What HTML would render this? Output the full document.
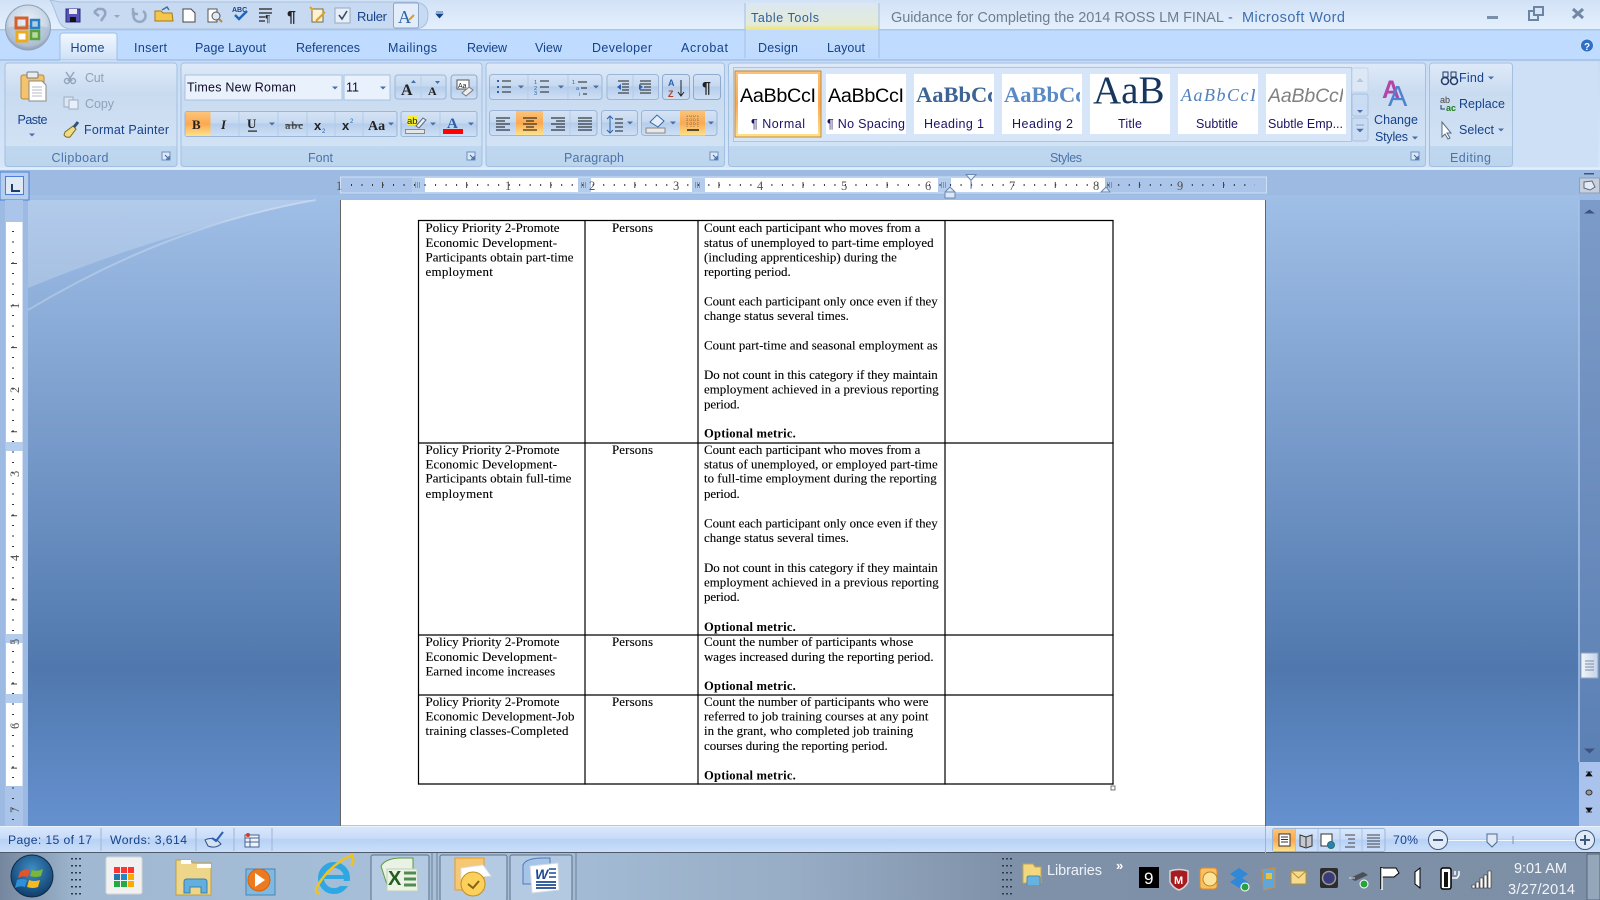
<!DOCTYPE html>
<html><head><meta charset="utf-8"><title>Microsoft Word</title>
<style>
html,body{margin:0;padding:0;width:1600px;height:900px;overflow:hidden;background:#9dbbe2}
svg{display:block}
text{font-family:"Liberation Sans",sans-serif;white-space:pre}
.r{font-size:12.5px;fill:#15428b}
.g{font-size:12.5px;fill:#4d72a8}
.k{font-size:12.5px;fill:#1a1a55}
.d{font-family:"Liberation Serif",serif;font-size:12.9px;fill:#000;stroke:#000;stroke-width:.12}
.b{font-family:"Liberation Serif",serif;font-size:12.6px;font-weight:bold;fill:#000}
.n{font-family:"Liberation Serif",serif;font-size:12.5px;fill:#555}
.w{fill:#fff;font-size:14px}
.s{font-size:12.2px;fill:#15428b}
</style></head><body>
<svg xmlns="http://www.w3.org/2000/svg" width="1600" height="900" viewBox="0 0 1600 900">
<defs>
<linearGradient id="tb" x1="0" y1="0" x2="0" y2="1"><stop offset="0" stop-color="#d2e2f6"/><stop offset="1" stop-color="#e4f0fd"/></linearGradient>
<linearGradient id="bg" gradientUnits="userSpaceOnUse" x1="0" y1="195" x2="0" y2="826"><stop offset="0" stop-color="#a0bfe7"/><stop offset=".75" stop-color="#5078ae"/><stop offset="1" stop-color="#6591cf"/></linearGradient>
<linearGradient id="grp" x1="0" y1="0" x2="0" y2="1"><stop offset="0" stop-color="#deeaf8"/><stop offset=".3" stop-color="#c9dbf0"/><stop offset=".8" stop-color="#d2e2f5"/><stop offset=".8" stop-color="#bfd7ef"/><stop offset="1" stop-color="#bcd5ee"/></linearGradient>
<linearGradient id="rib" x1="0" y1="0" x2="0" y2="1"><stop offset="0" stop-color="#c8dcf5"/><stop offset="1" stop-color="#d6e6f8"/></linearGradient>
<linearGradient id="btn" x1="0" y1="0" x2="0" y2="1"><stop offset="0" stop-color="#d5e3f5"/><stop offset=".45" stop-color="#c6d9f0"/><stop offset=".5" stop-color="#b5cdeb"/><stop offset="1" stop-color="#cfe0f5"/></linearGradient>
<linearGradient id="or" x1="0" y1="0" x2="0" y2="1"><stop offset="0" stop-color="#fbc47a"/><stop offset=".5" stop-color="#fba94f"/><stop offset="1" stop-color="#fde28d"/></linearGradient>
<linearGradient id="tt" x1="0" y1="0" x2="0" y2="1"><stop offset="0" stop-color="#dbe7f2"/><stop offset=".8" stop-color="#e3ebd9"/><stop offset="1" stop-color="#f5e566"/></linearGradient>
<linearGradient id="tt2" x1="0" y1="0" x2="0" y2="1"><stop offset="0" stop-color="#c4dcfb"/><stop offset="1" stop-color="#bfdbff"/></linearGradient>
<linearGradient id="hm" x1="0" y1="0" x2="0" y2="1"><stop offset="0" stop-color="#f2f8ff"/><stop offset="1" stop-color="#cfe1f7"/></linearGradient>
<linearGradient id="st" x1="0" y1="0" x2="0" y2="1"><stop offset="0" stop-color="#d8e7fb"/><stop offset=".45" stop-color="#c9dcf8"/><stop offset=".5" stop-color="#b7d1f5"/><stop offset="1" stop-color="#cde0fa"/></linearGradient>
<linearGradient id="task" x1="0" y1="0" x2="1" y2="0"><stop offset="0" stop-color="#75879e"/><stop offset=".05" stop-color="#a0b8d2"/><stop offset=".3" stop-color="#a8c1db"/><stop offset=".5" stop-color="#97acc5"/><stop offset=".63" stop-color="#7f91a8"/><stop offset="1" stop-color="#7d8fa6"/></linearGradient>
<linearGradient id="sb" x1="0" y1="0" x2="0" y2="1"><stop offset="0" stop-color="#7d9bc8"/><stop offset="1" stop-color="#5b80b4"/></linearGradient>
<linearGradient id="th" x1="0" y1="0" x2="1" y2="0"><stop offset="0" stop-color="#f2f6fb"/><stop offset="1" stop-color="#c4d3e7"/></linearGradient>
<radialGradient id="orb" cx=".5" cy=".4" r=".6"><stop offset="0" stop-color="#eef3fa"/><stop offset=".7" stop-color="#c9d6e6"/><stop offset="1" stop-color="#8e9fb5"/></radialGradient>
<radialGradient id="win" cx=".5" cy=".35" r=".7"><stop offset="0" stop-color="#3f8fc7"/><stop offset="1" stop-color="#0b3763"/></radialGradient>
<g id="ar"><path d="M-3,-1.5h6l-3,3z" fill="#4a6ea5"/></g>
<g id="launch"><rect x="-4" y="-4" width="8" height="8" fill="#dbe8f7" stroke="#6c8ebd"/><path d="M-1,-1l4,4M3,0v3h-3" stroke="#3f66a0" fill="none"/></g>
</defs>

<!-- title bar -->
<rect width="1600" height="30" fill="url(#tb)"/>
<rect y="29" width="1600" height="1.5" fill="#a9c6ea"/>
<!-- tab row -->
<rect y="30.5" width="1600" height="30" fill="#bfdbff"/>
<!-- QAT -->
<path d="M50,0C58,12 56,28 70,29H416Q428,28 428,15Q428,4 416,2H60Z" fill="#c8daf1" stroke="#a7c0de"/>
<!-- office button -->
<circle cx="28" cy="27.500" r="22.500" fill="url(#orb)" stroke="#8fa2bb"/>
<path d="M7,28Q28,22 49,28A21.500,21.500 0 0 1 7,28Z" fill="#a7bbd2" opacity=".6"/>
<rect x="16" y="18" width="11" height="10" fill="none" stroke="#d6602a" stroke-width="3"/>
<rect x="31" y="20" width="8" height="8" fill="#a8cfe4" stroke="#2a7fc4" stroke-width="2.500"/>
<rect x="17" y="32" width="10" height="9" fill="#fff" stroke="#eeaa1d" stroke-width="3"/>
<rect x="31" y="31" width="8" height="8" fill="#b9d9a0" stroke="#5aa23d" stroke-width="2.500"/>
<!-- QAT icons -->
<rect x="66" y="9" width="14" height="13" fill="#5553b8" stroke="#2c2a7a"/><rect x="69" y="9" width="8" height="5" fill="#e7e9f7"/><rect x="70" y="17" width="6" height="5" fill="#111"/>
<path d="M94,12l4,-3h4q4,1 3,6l-4,6M94,12l5,4" fill="none" stroke="#8fa5c0" stroke-width="2.500"/>
<path d="M114,15h6l-3,3z" fill="#92a6c0"/>
<path d="M143,11a6,6 0 1 1 -8,1M133,8v6h5" fill="none" stroke="#93a8c3" stroke-width="2.500"/>
<path d="M155,21V11h6l2,2h9l1,8z" fill="#f4c64e" stroke="#a57b14"/><path d="M162,10l5,-3 2,3" fill="none" stroke="#3e6eab" stroke-width="1.500"/>
<path d="M183,9h8l4,4v9h-12z" fill="#fff" stroke="#444"/>
<path d="M208,9h9v13h-9z" fill="#fff" stroke="#555"/><circle cx="216" cy="16" r="4" fill="#dfe9f5" stroke="#555"/><path d="M219,19l3,3" stroke="#c08820" stroke-width="2"/>
<text x="232" y="12" style="font-size:7px;font-weight:bold;fill:#15428b">ABC</text><path d="M235,15l4,4 8,-8" fill="none" stroke="#2166b8" stroke-width="2.500"/>
<path d="M259,9h13M259,13h13M259,17h6M259,21h6" stroke="#222" stroke-width="1.200"/><text x="265" y="22" style="font-size:10px;fill:#222">¶</text>
<text x="287" y="22" style="font-size:16px;font-weight:bold;fill:#222">¶</text>
<path d="M312,9h11v13h-11z" fill="#fdf1cf" stroke="#7a6a3a"/><path d="M310,7l3,3M316,21l9,-9" stroke="#e0a020" stroke-width="2"/>
<rect x="335" y="8" width="15" height="15" fill="#e6eef8" stroke="#97a9c0"/><path d="M339,15l3,4 5,-8" fill="none" stroke="#3a4a66" stroke-width="1.600"/>
<text class="r" x="357" y="21" textLength="30" style="font-size:13px">Ruler</text>
<rect x="393.500" y="3" width="25" height="25" rx="2" fill="#e3edf9" stroke="#8aa6cb"/>
<text x="398" y="23" style="font-size:18px;font-family:'Liberation Serif',serif;fill:#2a62ae">A</text><path d="M409,20l5,-5" stroke="#d8a020" stroke-width="2"/>
<path d="M436,12h7M436,14h7l-3.500,4z" fill="#15428b" stroke="#15428b" stroke-width=".7"/>
<!-- table tools -->
<rect x="745" y="3" width="134" height="27" fill="url(#tt)"/>
<rect x="745" y="30" width="134" height="28" fill="url(#tt2)"/>
<path d="M745,3V58M879,3V58" stroke="#a6bfdc"/>
<text class="r" x="751" y="22" textLength="68" style="fill:#2f5f9a">Table Tools</text>
<text x="891" y="22" textLength="333" style="font-size:14.5px;fill:#6f7e90">Guidance for Completing the 2014 ROSS LM FINAL</text>
<text x="1228" y="22" style="font-size:14.5px;fill:#3f6fb0">-</text>
<text x="1242" y="22" textLength="103" style="font-size:14.5px;fill:#3f6fb0">Microsoft Word</text>
<rect x="1487" y="16" width="11" height="3" fill="#7a8fa9"/>
<rect x="1529" y="11" width="9" height="9" fill="none" stroke="#6c84a6" stroke-width="2"/><rect x="1534" y="7" width="9" height="8" fill="#d7e4f4" stroke="#6c84a6" stroke-width="2"/>
<path d="M1573,9l10,9M1583,9l-10,9" stroke="#7187a5" stroke-width="3"/>
<!-- tabs -->
<path d="M60,60V36q0,-3 3,-3H114q3,0 3,3V60z" fill="url(#hm)" stroke="#9ebfe6"/>
<g class="tabs">
<text class="r" x="70.500" y="52" textLength="34">Home</text>
<text class="r" x="134" y="52" textLength="33">Insert</text>
<text class="r" x="195" y="52" textLength="71">Page Layout</text>
<text class="r" x="296" y="52" textLength="64">References</text>
<text class="r" x="388" y="52" textLength="49">Mailings</text>
<text class="r" x="467" y="52" textLength="40">Review</text>
<text class="r" x="535" y="52" textLength="27">View</text>
<text class="r" x="592" y="52" textLength="60">Developer</text>
<text class="r" x="681" y="52" textLength="47">Acrobat</text>
<text class="r" x="758" y="52" textLength="40">Design</text>
<text class="r" x="827" y="52" textLength="38">Layout</text>
</g>
<circle cx="1587" cy="45.500" r="6.500" fill="#2f6fc4" stroke="#cfe0f5"/><text x="1584" y="50" style="font-size:10px;font-weight:bold;fill:#fff">?</text>
<!-- ribbon -->
<rect y="60" width="1600" height="110" fill="url(#rib)"/>
<path d="M0,60H60M117,60H1600" stroke="#8fb2de"/>
<rect x="1428" y="62" width="170" height="105" fill="#cde0f5" rx="2"/>
<path d="M0,168.500H1600" stroke="#dfeefa" stroke-width="2"/>
<g fill="url(#grp)" stroke="#a3c0e0">
<rect x="5" y="63" width="172" height="103.500" rx="3"/>
<rect x="181" y="63" width="301" height="103.500" rx="3"/>
<rect x="486" y="63" width="238.500" height="103.500" rx="3"/>
<rect x="728.500" y="63" width="697" height="103.500" rx="3"/>
<rect x="1429.500" y="63" width="83" height="103.500" rx="3"/>
</g>
<text class="g" x="51.500" y="162" textLength="57" style="font-size:12.5px">Clipboard</text>
<text class="g" x="308" y="162" textLength="25">Font</text>
<text class="g" x="564" y="162" textLength="60">Paragraph</text>
<text class="g" x="1050" y="162" textLength="32">Styles</text>
<text class="g" x="1450" y="162" textLength="41">Editing</text>
<use href="#launch" x="166" y="156"/><use href="#launch" x="471" y="156"/><use href="#launch" x="714" y="156"/><use href="#launch" x="1415" y="156"/>
<!-- clipboard -->
<rect x="21" y="75" width="23" height="24" rx="2" fill="#f3c36d" stroke="#b68a3a"/><rect x="27" y="72" width="11" height="6" rx="1" fill="#e8edf4" stroke="#7a7a7a"/>
<path d="M29,81h13l4,4v16h-17z" fill="#fff" stroke="#8a8a8a"/><path d="M32,87h10M32,90h10M32,93h10M32,96h10" stroke="#b4bcc8"/>
<text class="k" x="17.500" y="124" textLength="30" style="fill:#15428b">Paste</text><use href="#ar" x="32" y="135"/>
<path d="M66,72l6,9M74,72l-6,9" stroke="#93a6bd" stroke-width="1.500"/><circle cx="67" cy="81" r="2.500" fill="none" stroke="#93a6bd" stroke-width="1.500"/><circle cx="73" cy="81" r="2.500" fill="none" stroke="#93a6bd" stroke-width="1.500"/>
<text x="85" y="82" textLength="19" style="font-size:12.5px;fill:#8ea2ba">Cut</text>
<rect x="64" y="97" width="9" height="10" fill="#dce6f2" stroke="#9aadc4"/><rect x="69" y="100" width="9" height="9" fill="#e8eff7" stroke="#9aadc4"/>
<text x="85" y="108" textLength="29" style="font-size:12.5px;fill:#8ea2ba">Copy</text>
<path d="M65,132l8,-6 3,3 -6,8q-4,1 -6,-2z" fill="#efdc82" stroke="#7d6b22"/><path d="M74,127l4,-5" stroke="#34507c" stroke-width="3"/>
<text class="r" x="84" y="134" textLength="85">Format Painter</text>
<!-- font -->
<rect x="185" y="75" width="157" height="25" fill="#e9f2fc" stroke="#a6c1e1"/>
<rect x="344" y="75" width="46" height="25" fill="#e9f2fc" stroke="#a6c1e1"/>
<text x="187" y="91.500" textLength="109" style="font-size:12.5px;fill:#100a28">Times New Roman</text>
<text x="346" y="91.500" textLength="13" style="font-size:12.5px;fill:#100a28">11</text>
<use href="#ar" x="335" y="88"/><use href="#ar" x="383" y="88"/>
<rect x="395" y="75" width="51" height="24" rx="3" fill="url(#btn)" stroke="#9ab6d9"/><path d="M421,75v24" stroke="#b8cee8"/>
<text x="401" y="95" style="font-family:'Liberation Serif',serif;font-size:16px;font-weight:bold;fill:#222">A</text><path d="M411,83l2.500,-3 2.500,3z" fill="#3c6fb5"/>
<text x="428" y="95" style="font-family:'Liberation Serif',serif;font-size:12px;font-weight:bold;fill:#222">A</text><path d="M435,81h5l-2.500,3z" fill="#3c6fb5"/>
<rect x="451" y="75" width="26" height="24" rx="3" fill="url(#btn)" stroke="#8ea9ce"/>
<rect x="457" y="80" width="12" height="9" fill="#fff" stroke="#555"/><text x="458" y="88" style="font-size:7px;fill:#222">Aa</text><path d="M462,93l7,-6 4,3 -7,6z" fill="#eee" stroke="#7a7a7a"/>
<rect x="185" y="111.500" width="212" height="25" rx="2" fill="url(#btn)" stroke="#9ab6d9"/>
<rect x="185.500" y="112" width="25" height="24" fill="url(#or)"/>
<path d="M239,112v24M278,112v24M307,112v24M335,112v24M363,112v24" stroke="#b3cbe7"/>
<text x="192" y="129" style="font-family:'Liberation Serif',serif;font-size:13px;font-weight:bold;fill:#222">B</text>
<text x="221" y="129" style="font-family:'Liberation Serif',serif;font-size:13px;font-style:italic;font-weight:bold;fill:#222">I</text>
<text x="247" y="128" style="font-family:'Liberation Serif',serif;font-size:13px;font-weight:bold;fill:#222">U</text>
<rect x="248" y="130.500" width="9" height="1.200" fill="#222"/>
<text x="285" y="129" textLength="18" style="font-family:'Liberation Serif',serif;font-size:11px;font-weight:bold;fill:#555">abc</text>
<rect x="285" y="124.500" width="18" height="1" fill="#333"/>
<text x="314" y="130" style="font-size:13px;font-weight:bold;fill:#222">x</text><text x="322" y="133" style="font-size:6px;fill:#2b62b0">2</text>
<text x="342" y="130" style="font-size:13px;font-weight:bold;fill:#222">x</text><text x="350" y="123" style="font-size:6px;fill:#2b62b0">2</text>
<text x="368" y="130" style="font-family:'Liberation Serif',serif;font-size:14px;font-weight:bold;fill:#222">Aa</text>
<use href="#ar" x="272" y="124"/><use href="#ar" x="391" y="124"/>
<rect x="401" y="111.500" width="76" height="25" rx="2" fill="url(#btn)" stroke="#9ab6d9"/><path d="M440,112v24" stroke="#b3cbe7"/>
<rect x="407" y="116" width="10" height="9" fill="#f8ee30"/><text x="407" y="124" style="font-size:9.500px;fill:#222">ab</text><path d="M416,126l7,-8 3,2 -7,8z" fill="#e8eef6" stroke="#5a6a80"/>
<rect x="405.500" y="129.500" width="19" height="4" fill="#e6e6e6" stroke="#8a8a8a"/>
<use href="#ar" x="433" y="124"/>
<text x="447" y="128" style="font-family:'Liberation Serif',serif;font-size:15px;font-weight:bold;fill:#2b5fa8">A</text><rect x="443" y="129" width="20" height="5" fill="#f00"/>
<use href="#ar" x="471" y="124"/>
<!-- paragraph -->
<rect x="489.500" y="74.500" width="112.500" height="25" rx="3" fill="url(#btn)" stroke="#9ab6d9"/>
<rect x="607" y="74.500" width="51.500" height="25" rx="3" fill="url(#btn)" stroke="#9ab6d9"/>
<rect x="662.500" y="74.500" width="27" height="25" rx="3" fill="url(#btn)" stroke="#8ea9ce"/>
<rect x="693.500" y="74.500" width="27" height="25" rx="3" fill="url(#btn)" stroke="#8ea9ce"/>
<path d="M528,75v24M568,75v24M633,75v24" stroke="#b3cbe7"/>
<path d="M502,81h9M502,87h9M502,92h9" stroke="#222"/><path d="M497,81h2M497,87h2M497,92h2" stroke="#2b62b0" stroke-width="2"/>
<path d="M540,81h9M540,87h9M540,92h9" stroke="#222"/><text x="534" y="84" style="font-size:5.500px;fill:#2b62b0">1</text><text x="534" y="90" style="font-size:5.500px;fill:#2b62b0">2</text><text x="534" y="95" style="font-size:5.500px;fill:#2b62b0">3</text>
<path d="M578,82h9M581,88h6M583,94h4" stroke="#222"/><text x="572" y="84" style="font-size:5.500px;fill:#2b62b0">1</text><text x="576" y="90" style="font-size:5.500px;fill:#2b62b0">a</text><text x="579" y="96" style="font-size:5.500px;fill:#2b62b0">i</text>
<use href="#ar" x="521" y="87"/><use href="#ar" x="561" y="87"/><use href="#ar" x="596" y="87"/>
<path d="M618,81h11M622,84h7M622,87h7M622,90h7M618,93h11" stroke="#222"/><path d="M617,87l4,-3v6z" fill="#2b62b0"/>
<path d="M640,81h11M640,84h11M644,87h7M640,90h11M640,93h11" stroke="#222"/><path d="M643,87l-4,-3v6z" fill="#2b62b0"/>
<text x="668" y="86" style="font-size:9px;font-weight:bold;fill:#2b62b0">A</text><text x="668" y="97" style="font-size:9px;font-weight:bold;fill:#b0432a">Z</text><path d="M681,80v15M678,92l3,4 3,-4" stroke="#222" fill="none"/>
<text x="702" y="93" style="font-size:16px;font-weight:bold;fill:#222">¶</text>
<rect x="489.500" y="110.500" width="107.500" height="25" rx="3" fill="url(#btn)" stroke="#9ab6d9"/>
<rect x="516" y="111" width="27" height="24" fill="url(#or)"/>
<path d="M570,111v24" stroke="#b3cbe7"/>
<path d="M496,118h14M496,121h9M496,124h14M496,127h9M496,130h14" stroke="#111" fill="none"/>
<path d="M523,118h14M526,121h8M523,124h14M526,127h8M523,130h14" stroke="#111" fill="none"/>
<path d="M551,118h14M556,121h9M551,124h14M556,127h9M551,130h14" stroke="#111" fill="none"/>
<path d="M578,118h14M578,121h14M578,124h14M578,127h14M578,130h14" stroke="#111" fill="none"/>
<rect x="601.500" y="110.500" width="36" height="25" rx="3" fill="url(#btn)" stroke="#9ab6d9"/>
<path d="M615,119h8M615,123h8M615,127h8M615,131h8" stroke="#222" fill="none"/><path d="M610,116v17M607,119l3,-3 3,3M607,130l3,3 3,-3" stroke="#2b62b0" fill="none"/>
<use href="#ar" x="630" y="123"/>
<rect x="641.500" y="110.500" width="75.500" height="25" rx="3" fill="url(#btn)" stroke="#9ab6d9"/>
<rect x="680" y="110.500" width="25" height="25" fill="url(#or)"/>
<path d="M650,122l7,-7 7,6 -6,6z" fill="#e5eef8" stroke="#3b6aa8"/><rect x="646" y="128" width="19" height="5" fill="#e8e8e8" stroke="#888"/>
<use href="#ar" x="673" y="123"/><use href="#ar" x="711" y="123"/>
<path d="M687,116h11M687,120h11M687,124h11M687,116v11M691,116v11M694,116v11M698,116v11" stroke="#9c7c50" stroke-dasharray="1 1"/><path d="M687,130h12" stroke="#222" stroke-width="1.500"/>
<!-- styles -->
<rect x="733.500" y="67.500" width="618" height="74" fill="#d6e5f7" stroke="#acc5e3"/>
<rect x="735" y="71" width="86" height="66" fill="url(#or)" stroke="#c48a3c"/>
<rect x="738" y="74" width="80" height="60" fill="#fff"/>
<rect x="826" y="74" width="80" height="60" fill="#fff"/><rect x="914" y="74" width="80" height="60" fill="#fff"/><rect x="1002" y="74" width="80" height="60" fill="#fff"/><rect x="1090" y="74" width="80" height="60" fill="#fff"/><rect x="1178" y="74" width="80" height="60" fill="#fff"/><rect x="1266" y="74" width="80" height="60" fill="#fff"/>
<svg x="740" y="74" width="76" height="40"><text x="0" y="28" textLength="76" style="font-size:19.800px;fill:#000">AaBbCcI</text></svg>
<svg x="828" y="74" width="76" height="40"><text x="0" y="28" textLength="76" style="font-size:19.800px;fill:#000">AaBbCcI</text></svg>
<svg x="916" y="74" width="76" height="40"><text x="0" y="28" style="font-family:'Liberation Serif',serif;font-size:22.500px;font-weight:bold;fill:#3d6494">AaBbCc</text></svg>
<svg x="1004" y="74" width="76" height="40"><text x="0" y="28" style="font-family:'Liberation Serif',serif;font-size:22.500px;font-weight:bold;fill:#5a8ac6">AaBbCc</text></svg>
<svg x="1092" y="76" width="71" height="42"><text x="1" y="27" style="font-family:'Liberation Serif',serif;font-size:39px;fill:#17365d">AaB</text></svg>
<svg x="1180" y="74" width="75" height="40"><text x="1" y="27" textLength="75" style="font-family:'Liberation Serif',serif;font-size:18px;font-style:italic;fill:#4f81bd">AaBbCcI</text></svg>
<svg x="1268" y="74" width="75" height="40"><text x="0" y="28" textLength="76" style="font-size:19.500px;font-style:italic;fill:#808080">AaBbCcI</text></svg>
<text class="k" x="751" y="128" textLength="54" style="fill:#1b1464">¶ Normal</text>
<text class="k" x="827" y="128" textLength="78" style="fill:#1b1464">¶ No Spacing</text>
<text class="k" x="924" y="128" textLength="60" style="fill:#1b1464">Heading 1</text>
<text class="k" x="1012" y="128" textLength="61" style="fill:#1b1464">Heading 2</text>
<text class="k" x="1118" y="128" textLength="24" style="fill:#1b1464">Title</text>
<text class="k" x="1196" y="128" textLength="42" style="fill:#1b1464">Subtitle</text>
<text class="k" x="1268" y="128" textLength="75" style="fill:#1b1464">Subtle Emp...</text>
<rect x="1352" y="68" width="16" height="24" rx="2" fill="#dce8f6" stroke="#c2d5ea"/><path d="M1356.500,82l3.500,-4 3.500,4z" fill="#b8c6d8"/>
<rect x="1352" y="94" width="16" height="22" rx="2" fill="#c9dcf3" stroke="#a6c1e1"/><path d="M1357,110h6l-3,3z" fill="#4a6ea5"/>
<rect x="1352" y="118" width="16" height="23" rx="2" fill="#c9dcf3" stroke="#a6c1e1"/><path d="M1356,125h8M1357,129h6l-3,3z" fill="#4a6ea5" stroke="#4a6ea5" stroke-width=".6"/>
<text x="1382" y="98" style="font-size:25px;font-weight:bold;fill:#b344a8">A</text><text x="1388" y="106" style="font-size:29px;fill:#4f83cf">A</text>
<text class="r" x="1374" y="124" textLength="44">Change</text>
<text class="r" x="1375" y="141" textLength="33">Styles</text><use href="#ar" x="1415" y="138"/>
<rect x="1443" y="72" width="5" height="5" fill="#d5e3f2" stroke="#1f3b66"/><rect x="1451" y="72" width="5" height="5" fill="#d5e3f2" stroke="#1f3b66"/>
<circle cx="1445" cy="81" r="3.500" fill="#d5e3f2" stroke="#1f3b66" stroke-width="1.500"/><circle cx="1454" cy="81" r="3.500" fill="#d5e3f2" stroke="#1f3b66" stroke-width="1.500"/>
<text class="r" x="1459" y="82" textLength="25">Find</text><use href="#ar" x="1491" y="78"/>
<text x="1440" y="103" style="font-size:9px;fill:#444">ab</text><text x="1446" y="111" style="font-size:9px;font-weight:bold;fill:#1f7a20">ac</text><path d="M1441,105v4h4" stroke="#1f3b66" fill="none"/>
<text class="r" x="1459" y="108" textLength="46">Replace</text>
<path d="M1442,122v15l3,-3 3,5 2,-1 -3,-5h4z" fill="#fff" stroke="#5a6a7e"/>
<text class="r" x="1459" y="134" textLength="35">Select</text><use href="#ar" x="1501" y="130"/>

<!-- workspace -->
<rect y="170" width="1600" height="25" fill="#9dbbe2"/>
<rect y="195" width="1580" height="631" fill="url(#bg)"/>
<rect y="172" width="28" height="654" fill="#9dbbe2"/>
<path d="M28,288Q170,230 316,200H28z" fill="#fff" opacity=".2"/>
<path d="M28,310Q170,225 316,200" stroke="#fff" stroke-opacity=".25" fill="none" stroke-width="2"/>
<rect x="0" y="172" width="29" height="28" fill="#b6cee9" stroke="#4b7ddc"/>
<rect x="5.500" y="176.500" width="18" height="18" fill="#dfe9f6" stroke="#4b7ddc"/><path d="M12,184v7h8" stroke="#1e3d6b" stroke-width="2" fill="none"/>
<!-- h ruler -->
<rect x="340.500" y="177" width="926" height="16" fill="#aac5e9" stroke="#cfe0f5"/>
<rect x="425" y="178" width="680" height="14" fill="#fff"/>
<rect x="412" y="177.500" width="13" height="15" fill="#b5cdec"/><rect x="578" y="177.500" width="13" height="15" fill="#b5cdec"/><rect x="692" y="177.500" width="13" height="15" fill="#b5cdec"/><rect x="938" y="177.500" width="13" height="15" fill="#b5cdec"/>
<path d="M415,185h6M415,183h6M415,187h6M581,185h6M581,183h6M581,187h6M695,185h6M695,183h6M695,187h6M941,185h6M941,183h6M941,187h6M1107,185h6M1107,183h6M1107,187h6" stroke="#4a5f86" stroke-dasharray="1 1"/>
<path d="M351,185H1255" stroke="#333" stroke-width="2" stroke-dasharray="1 9.510"/>
<path d="M382,185H1260" stroke="#444" stroke-width="6" stroke-dasharray="1 83.100"/>
<text class="n" x="336" y="190">1</text><text class="n" x="505" y="190">1</text><text class="n" x="589" y="190">2</text><text class="n" x="673" y="190">3</text><text class="n" x="757" y="190">4</text><text class="n" x="841" y="190">5</text><text class="n" x="925" y="190">6</text><text class="n" x="1009" y="190">7</text><text class="n" x="1093" y="190">8</text><text class="n" x="1177" y="190">9</text>
<path d="M966,174.500h10l-5,6z" fill="#e8f0fa" stroke="#6b89b3"/><path d="M971,181v8" stroke="#6b89b3"/>
<path d="M945,198v-6l5,-5 5,5v6z" fill="#dce8f6" stroke="#6b89b3"/><path d="M945,192h10" stroke="#6b89b3"/>
<path d="M1101,192l5,-5 4,5z" fill="#dce8f6" stroke="#6b89b3"/>
<!-- v ruler -->
<rect x="5" y="200" width="18" height="626" fill="#aac5e9"/>
<rect x="6" y="222" width="16.500" height="564" fill="#fff"/>
<rect x="6" y="442" width="16.500" height="9" fill="#b5cdec"/><rect x="6" y="634" width="16.500" height="9" fill="#b5cdec"/><rect x="6" y="694" width="16.500" height="9" fill="#b5cdec"/>
<path d="M13,231V826" stroke="#333" stroke-width="2" stroke-dasharray="1 9.500"/>
<path d="M14,263V826" stroke="#444" stroke-width="6" stroke-dasharray="1 83.100"/>
<text class="n" transform="translate(19,309) rotate(-90)">1</text><text class="n" transform="translate(19,393) rotate(-90)">2</text><text class="n" transform="translate(19,477) rotate(-90)">3</text><text class="n" transform="translate(19,561) rotate(-90)">4</text><text class="n" transform="translate(19,645) rotate(-90)">5</text><text class="n" transform="translate(19,729) rotate(-90)">6</text><text class="n" transform="translate(19,813) rotate(-90)">7</text>
<!-- page -->
<rect x="340.500" y="200" width="925" height="625.500" fill="#fff"/>
<path d="M340.500,200V826M1265.500,200V826" stroke="#666"/>
<!-- table -->
<g stroke="#000" stroke-width="1.200">
<path d="M418.500,220V784.600M585,220V784.600M698,220V784.600M945,220V784.600M1113,220V784.600"/>
<path d="M418,220.500H1113.600M418,443H1113.600M418,635H1113.600M418,695H1113.600M418,784H1113.600"/>
</g>
<rect x="1111" y="786" width="4" height="4" fill="#fff" stroke="#555" stroke-width=".8"/>
<!-- row 1 -->
<text class="d" x="425.500" y="232" textLength="134">Policy Priority 2-Promote</text>
<text class="d" x="425.500" y="247" textLength="131.500">Economic Development-</text>
<text class="d" x="425.500" y="261.500" textLength="148">Participants obtain part-time</text>
<text class="d" x="425.500" y="276" textLength="67.300">employment</text>
<text class="d" x="612" y="232" textLength="41">Persons</text>
<text class="d" x="704" y="232" textLength="216.300">Count each participant who moves from a</text>
<text class="d" x="704" y="247" textLength="229.600">status of unemployed to part-time employed</text>
<text class="d" x="704" y="261.500" textLength="192.900">(including apprenticeship) during the</text>
<text class="d" x="704" y="276" textLength="86.700">reporting period.</text>
<text class="d" x="704" y="305.500" textLength="233.700">Count each participant only once even if they</text>
<text class="d" x="704" y="320" textLength="144.900">change status several times.</text>
<text class="d" x="704" y="349.500" textLength="233.700">Count part-time and seasonal employment as</text>
<text class="d" x="704" y="379" textLength="233.700">Do not count in this category if they maintain</text>
<text class="d" x="704" y="393.500" textLength="234.700">employment achieved in a previous reporting</text>
<text class="d" x="704" y="408.500" textLength="35.700">period.</text>
<text class="b" x="704" y="437.500" textLength="91.800">Optional metric.</text>
<!-- row 2 -->
<text class="d" x="425.500" y="454" textLength="134">Policy Priority 2-Promote</text>
<text class="d" x="425.500" y="468.500" textLength="131.500">Economic Development-</text>
<text class="d" x="425.500" y="482.700" textLength="145.900">Participants obtain full-time</text>
<text class="d" x="425.500" y="498" textLength="67.300">employment</text>
<text class="d" x="612" y="454" textLength="41">Persons</text>
<text class="d" x="704" y="454" textLength="216.300">Count each participant who moves from a</text>
<text class="d" x="704" y="468.500" textLength="233.700">status of unemployed, or employed part-time</text>
<text class="d" x="704" y="482.700" textLength="232.700">to full-time employment during the reporting</text>
<text class="d" x="704" y="498" textLength="35.700">period.</text>
<text class="d" x="704" y="527.500" textLength="233.700">Count each participant only once even if they</text>
<text class="d" x="704" y="541.800" textLength="144.900">change status several times.</text>
<text class="d" x="704" y="572" textLength="233.700">Do not count in this category if they maintain</text>
<text class="d" x="704" y="586.700" textLength="234.700">employment achieved in a previous reporting</text>
<text class="d" x="704" y="601" textLength="35.700">period.</text>
<text class="b" x="704" y="631" textLength="91.800">Optional metric.</text>
<!-- row 3 -->
<text class="d" x="425.500" y="646" textLength="134">Policy Priority 2-Promote</text>
<text class="d" x="425.500" y="661" textLength="131.500">Economic Development-</text>
<text class="d" x="425.500" y="675.500" textLength="129.600">Earned income increases</text>
<text class="d" x="612" y="646" textLength="41">Persons</text>
<text class="d" x="704" y="646" textLength="209.200">Count the number of participants whose</text>
<text class="d" x="704" y="661" textLength="229.600">wages increased during the reporting period.</text>
<text class="b" x="704" y="690" textLength="91.800">Optional metric.</text>
<!-- row 4 -->
<text class="d" x="425.500" y="706" textLength="134">Policy Priority 2-Promote</text>
<text class="d" x="425.500" y="720.500" textLength="149">Economic Development-Job</text>
<text class="d" x="425.500" y="735" textLength="142.900">training classes-Completed</text>
<text class="d" x="612" y="706" textLength="41">Persons</text>
<text class="d" x="704" y="706" textLength="224.500">Count the number of participants who were</text>
<text class="d" x="704" y="720.500" textLength="224.500">referred to job training courses at any point</text>
<text class="d" x="704" y="735" textLength="209.200">in the grant, who completed job training</text>
<text class="d" x="704" y="750" textLength="183.700">courses during the reporting period.</text>
<text class="b" x="704" y="779.500" textLength="91.800">Optional metric.</text>
<!-- scrollbar -->
<rect x="1579" y="172" width="21" height="654" fill="#9dbbe2"/>
<rect x="1584" y="173" width="10" height="1.500" fill="#3a5680"/>
<rect x="1579.500" y="178" width="20" height="15" fill="#c6d0dd" stroke="#8fa0b6"/><path d="M1584,182l8,-1 3,6 -5,3 -6,-2z" fill="#e5ebf3" stroke="#5a6a80"/>
<rect x="1579" y="200" width="21" height="562" fill="url(#sb)"/>
<path d="M1579,200V762" stroke="#a9c3e8" stroke-width="1.500"/>
<path d="M1584,213.500l5.500,-4 5.500,4z" fill="#3c5380"/>
<rect x="1581" y="653" width="17" height="25" fill="url(#th)" stroke="#8fa3c0"/>
<path d="M1585,661h9M1585,664h9M1585,667h9M1585,670h9" stroke="#7b8ca8"/>
<path d="M1584,748.500h11l-5.500,5z" fill="#3c5380"/>
<rect x="1579" y="762" width="21" height="64" fill="#a9c3ec"/>
<path d="M1586,776h6l-3,-4zM1586,775.500h6M1586,772h6" fill="#111" stroke="#111" stroke-width=".7"/>
<ellipse cx="1589" cy="792.500" rx="3" ry="2.500" fill="#999" stroke="#333"/>
<path d="M1586,808h6l-3,4zM1586,808.500h6M1586,812h6" fill="#111" stroke="#111" stroke-width=".7"/>
<!-- status bar -->
<rect y="826" width="1600" height="27" fill="url(#st)"/>
<path d="M0,826.500H1600" stroke="#eaf2fd"/>
<path d="M0,852.500H1600" stroke="#4c5a6c"/>
<path d="M1265.500,826V853M101,828V851M196,828V851M234,828V851M272,828V851" stroke="#9fb5d2"/>
<text class="s" x="8" y="844" textLength="84">Page: 15 of 17</text>
<text class="s" x="110" y="844" textLength="77">Words: 3,614</text>
<path d="M205,840q5,-3 12,0l4,4q-6,5 -13,2z" fill="#d5e2f3" stroke="#2b4f87"/><path d="M212,838l4,3 7,-9" fill="none" stroke="#2b5fb0" stroke-width="2"/>
<rect x="245" y="835" width="14" height="12" fill="#eef3fb" stroke="#47638f"/><path d="M245,838h14M245,842h14M250,838v9" stroke="#47638f"/><circle cx="248" cy="835" r="2" fill="#d43a2a"/>
<rect x="1272.500" y="828.500" width="112.500" height="23" rx="2" fill="url(#st)" stroke="#9ab6d9"/>
<rect x="1273" y="829" width="22" height="22" fill="url(#or)"/>
<path d="M1295.500,829V851M1318,829V851M1340,829V851M1362,829V851" stroke="#aac3e3"/>
<rect x="1279" y="834" width="11" height="12" fill="#fff" stroke="#333"/><path d="M1281,837h7M1281,839.500h7M1281,842h7" stroke="#333"/>
<path d="M1300,835l6,2 6,-2v11l-6,2 -6,-2zM1306,837v10" fill="#c5c9cf" stroke="#333"/>
<rect x="1321" y="834" width="11" height="12" fill="#fff" stroke="#333"/><circle cx="1331" cy="845" r="3.500" fill="#2b7fb5" stroke="#276"/>
<path d="M1345,835h10M1348,839h7M1348,843h7M1345,847h10" stroke="#444"/>
<path d="M1367,835h13M1367,838h13M1367,841h13M1367,844h13M1367,847h13" stroke="#444"/>
<text class="s" x="1393" y="844" textLength="25">70%</text>
<path d="M1448,840.500H1576" stroke="#f3f8ff" stroke-width="1"/>
<path d="M1513,836v8" stroke="#7d95b8"/>
<circle cx="1438" cy="840" r="9.500" fill="#e1ebf8" stroke="#3f587d"/><path d="M1433,840h10" stroke="#3f587d" stroke-width="2"/>
<circle cx="1585" cy="840" r="9.500" fill="#e1ebf8" stroke="#3f587d"/><path d="M1580,840h10M1585,835v10" stroke="#3f587d" stroke-width="2"/>
<path d="M1487,834h10v8l-5,5 -5,-5z" fill="#dfe8f4" stroke="#4a6a95"/>
<!-- taskbar -->
<rect y="853" width="1600" height="47" fill="url(#task)"/>
<circle cx="32" cy="876" r="21" fill="url(#win)" stroke="#0e2a47"/>
<path d="M20,872q5,-4 10,-2l-2,7q-5,-2 -10,1z" fill="#e2542a"/><path d="M32,870q5,2 11,-1l-2,7q-5,2 -11,0z" fill="#7ab736"/><path d="M17,880q5,-2 10,0l-2,7q-5,-2 -10,1z" fill="#2f8fd8"/><path d="M29,880q5,2 11,0l-2,7q-5,2 -11,0z" fill="#f5b921"/>
<path d="M72,858V896M76,858V896M80,858V896" stroke="#2e3a4a" stroke-width="2" stroke-dasharray="1.500 5.500"/>
<rect x="106" y="857" width="36" height="37" rx="2" fill="#f1f1f1" stroke="#d5d5d5"/>
<rect x="114" y="867" width="6" height="6" fill="#f33"/><rect x="121" y="867" width="6" height="6" fill="#f33"/><rect x="128" y="867" width="6" height="6" fill="#f33"/><rect x="114" y="874" width="6" height="6" fill="#27a"/><rect x="121" y="874" width="6" height="6" fill="#28c"/><rect x="128" y="874" width="6" height="6" fill="#fa0"/><rect x="114" y="881" width="6" height="6" fill="#2a4"/><rect x="121" y="881" width="6" height="6" fill="#2a4"/><rect x="128" y="881" width="6" height="6" fill="#fa0"/>
<path d="M176,860h14l3,3h18v32h-35z" fill="#edd58a" stroke="#bb9e4c"/><rect x="181" y="860" width="10" height="4" fill="#fff"/><rect x="197" y="864" width="14" height="4" fill="#fff"/>
<path d="M184,893v-11q0,-3 3,-3h17q3,0 3,3v11h-6v-6h-11v6z" fill="#62aedc" stroke="#3c7fae"/>
<rect x="246" y="869" width="29" height="26" fill="#7fb8e0" stroke="#4a84b5"/><circle cx="259" cy="880" r="11" fill="#ee7a1f" stroke="#d26510"/><path d="M255,873l10,7 -10,7z" fill="#fff"/>
<circle cx="334" cy="878" r="13" fill="none" stroke="#2fa7e2" stroke-width="6"/><path d="M322,877h24" stroke="#2fa7e2" stroke-width="4"/><rect x="334" y="881" width="16" height="5" fill="#a3bcd8"/><path d="M320,893q-9,2 2,-14q12,-16 30,-24q3,6 -1,11" fill="none" stroke="#efc320" stroke-width="2.500"/>
<!-- task buttons -->
<g fill="#b8cde6" fill-opacity=".75" stroke="#5d6f86">
<rect x="371" y="855" width="58" height="46" rx="2"/><rect x="440" y="855" width="67" height="46" rx="2"/><rect x="510" y="855" width="62" height="46" rx="2"/>
</g>
<path d="M432,853V900M437,853V900M576,853V900" stroke="#6e8097"/>
<path d="M381,866q5,-8 20,-8h12v30h-25z" fill="#e9f2e4" stroke="#5a9a3f"/><path d="M387,869h30l1,22h-31z" fill="#ecf3e6" stroke="#bcd0b5"/><text x="388" y="885" style="font-size:20px;font-weight:bold;fill:#215f20">X</text><path d="M404,873h12M404,879h12M404,885h12" stroke="#4e8c50" stroke-width="3"/>
<path d="M455,858h29v32h-29z" fill="#f6c874" stroke="#e99a1e"/><path d="M461,868l22,-3 8,11 -30,3z" fill="#fff" stroke="#ddd"/><circle cx="473" cy="884" r="12" fill="#fbd15c" stroke="#c48d1c"/><path d="M468,884l5,4 6,-7" fill="none" stroke="#8a6010" stroke-width="2"/>
<path d="M523,884V865q3,-7 20,-7h7v26z" fill="#a6c3e8" stroke="#4c79b8"/><path d="M530,866l28,-3 1,27 -27,3z" fill="#fff" stroke="#d0d9e5"/><text x="535" y="879" style="font-size:14px;font-weight:bold;font-style:italic;fill:#1d4a94">W</text><path d="M536,882h20M536,885h20M536,888h20" stroke="#1d4a94" stroke-width="1.800"/><path d="M549,869h7M549,873h7M549,877h7" stroke="#1d4a94" stroke-width="1.500"/>
<!-- tray -->
<path d="M1003,858V896M1007,858V896M1011,858V896" stroke="#2e3a4a" stroke-width="2" stroke-dasharray="1.500 5.500"/>
<path d="M1023,864h10l2,3h6v16h-18z" fill="#f2d77f" stroke="#c4a552"/><path d="M1027,885v-7q0,-2 2,-2h9q2,0 2,2v7" fill="#67b3e0" stroke="#4c88b4"/>
<text x="1047" y="875" textLength="55" style="font-size:14.500px;fill:#eef3f9">Libraries</text>
<text x="1116" y="870" style="font-size:13px;font-weight:bold;fill:#fff">»</text>
<rect x="1139" y="867" width="20" height="21" fill="#000"/><text x="1144" y="884" style="font-size:17px;fill:#fff">9</text>
<path d="M1170,871q9,-3 18,0v11q-3,6 -9,8q-6,-2 -9,-8z" fill="#a71a1f" stroke="#d5d5d5" stroke-width="1.500"/><text x="1174" y="884" style="font-size:11px;font-weight:bold;fill:#fff">M</text>
<rect x="1200" y="868" width="17" height="21" rx="3" fill="#f8c060" stroke="#e28a28"/><circle cx="1210" cy="879" r="7" fill="#fde39a" stroke="#b6852a"/>
<path d="M1230,874l9,-6 9,6 -9,6zM1230,882l9,-6 9,6 -9,6z" fill="#2f88d8"/><circle cx="1245" cy="887" r="4" fill="#25a244" stroke="#fff"/>
<path d="M1262,870l13,-2v19l-11,3z" fill="#5ea7dc" stroke="#e28a28"/><rect x="1266" y="873" width="6" height="6" fill="#e8c23c"/>
<rect x="1291" y="871" width="15" height="13" fill="#f6dc8a" stroke="#b18f3a"/><path d="M1291,871l7.500,7 7.500,-7" fill="none" stroke="#b18f3a"/>
<rect x="1320" y="868" width="18" height="20" rx="2" fill="#2c2c2e"/><circle cx="1329" cy="878" r="6.500" fill="#3a3c78" stroke="#9a9a9a" stroke-width="1.500"/>
<path d="M1350,878l13,-6 5,3 -13,6z" fill="#4a4f58"/><path d="M1349,878h6" stroke="#ddd"/><circle cx="1364" cy="884" r="4" fill="#27a23f" stroke="#fff"/>
<path d="M1381,867v22" stroke="#000" stroke-width="1.500"/><path d="M1382,868h14l3,5 -5,4h-12z" fill="#fff" stroke="#000"/><path d="M1382,868v22" stroke="#fff" stroke-width="1.500"/>
<path d="M1415,872v12l5,4v-20z" fill="#fff" stroke="#000"/>
<rect x="1441" y="868" width="10" height="21" rx="2" fill="#fff" stroke="#000" stroke-width="1.500"/><rect x="1444" y="872" width="4" height="15" fill="#111"/><path d="M1452,878h5l2,-3v-4M1455,871v4M1459,871v4" stroke="#fff" stroke-width="1.500" fill="none"/>
<path d="M1472,885h3v3h-3zM1476,882h3v6h-3zM1480,878h3v10h-3zM1484,875h3v13h-3zM1488,871h3v17h-3z" fill="#fff" stroke="#222" stroke-width=".6"/>
<text x="1514" y="873" textLength="53" style="font-size:14.500px;fill:#f2f5f9">9:01 AM</text>
<text x="1508" y="894" textLength="67" style="font-size:14.500px;fill:#f2f5f9">3/27/2014</text>
<rect x="1587" y="854" width="13" height="46" fill="#94a6ba" stroke="#55667c"/>
</svg>
</body></html>
